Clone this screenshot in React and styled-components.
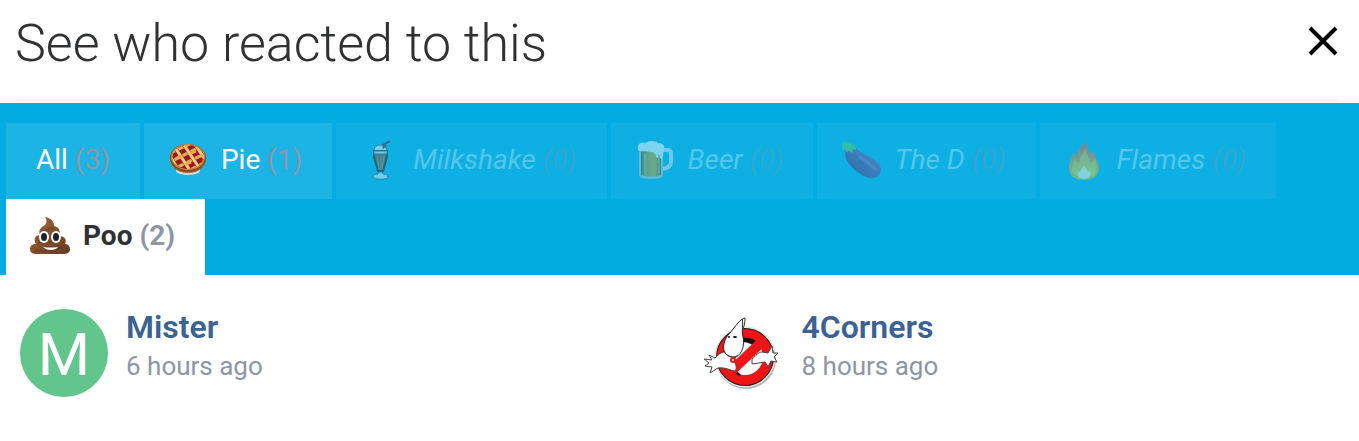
import React, { useState } from "react";
import styled, { createGlobalStyle } from "styled-components";

const GlobalStyle = createGlobalStyle`
  * {
    box-sizing: border-box;
  }
  body {
    margin: 0;
    background-color: #fff;
    color: #2f3132;
    font-family: Roboto, "Liberation Sans", sans-serif;
  }
`;

const Header = styled.header`
  display: flex;
  align-items: center;
  justify-content: space-between;
  margin: 0 21px 0 15px;
  padding: 8px 0 19px;
  border-bottom: 4px solid #f8f8f4;
`;

const Title = styled.h1`
  margin: 0;
  font-size: 52px;
  font-weight: 300;
  line-height: 72px;
`;

const CloseButton = styled.button`
  display: flex;
  padding: 0;
  margin-bottom: 6px;
  border: none;
  background: none;
  color: #000;
  cursor: pointer;
`;

const TabList = styled.div`
  display: flex;
  flex-wrap: wrap;
  column-gap: 4px;
  padding: 20px 6px 0;
  background-color: #02ace2;
`;

const Emoji = styled.svg`
  width: 40px;
  height: 40px;
  margin-right: 13px;
`;

const Count = styled.span`
  color: #8d96a5;
`;

const Tab = styled.button`
  display: flex;
  align-items: center;
  height: 76px;
  padding: 0 30px 2px;
  padding-left: ${({ $icon }) => ($icon ? "24px" : "30px")};
  border: none;
  background-color: rgba(255, 255, 255, 0.1);
  color: #fff;
  font-family: inherit;
  font-size: 28px;
  line-height: 36px;
  white-space: pre;
  cursor: pointer;

  &[aria-selected="true"] {
    background-color: #fff;
    color: #2f3132;
    font-weight: bold;
  }

  &:disabled {
    opacity: 0.5;
    color: rgba(255, 255, 255, 0.6);
    font-style: italic;
    cursor: default;
  }

  &:disabled ${Count} {
    opacity: 0.6;
  }
`;

const People = styled.ul`
  display: grid;
  grid-template-columns: 1fr 1fr;
  margin: 0;
  padding: 34px 4px;
  list-style: none;
`;

const Person = styled.li`
  display: flex;
  gap: 18px;
  padding-left: 16px;
`;

const Letter = styled.div`
  display: flex;
  align-items: center;
  justify-content: center;
  width: 88px;
  height: 88px;
  padding-top: 3px;
  border-radius: 50%;
  background-color: #62c58b;
  color: #fff;
  font-size: 60px;
`;

const Photo = styled.svg`
  width: 88px;
  height: 88px;
`;

const Name = styled.a`
  display: block;
  color: #3b6292;
  font-size: 32px;
  font-weight: 600;
  line-height: 36px;
  text-decoration: none;
`;

const Time = styled.div`
  margin-top: 3px;
  color: #8d96a5;
  font-size: 26px;
  line-height: 36px;
`;

const Pie = () => (
  <Emoji viewBox="0 0 40 40" aria-hidden="true">
    <ellipse cx="20" cy="31" rx="12" ry="4" fill="#cdd9df" />
    <path d="M2 18c0 9 8 15 18 15s18-6 18-15z" fill="#b5682a" />
    <ellipse cx="20" cy="18" rx="18" ry="14" fill="#8b4a1c" />
    <ellipse cx="20" cy="17" rx="17" ry="13" fill="#d18b3d" />
    <ellipse cx="20" cy="17" rx="15" ry="12" fill="#9c1420" />
    <clipPath id="pie">
      <ellipse cx="20" cy="17" rx="16" ry="12" />
    </clipPath>
    <g clipPath="url(#pie)" fill="none">
      <path d="M0 14 24 3M0 23 34 6M4 30 40 12M16 33 42 20" stroke="#8b3a16" strokeWidth="4" />
      <path d="M0 14 24 3M0 23 34 6M4 30 40 12M16 33 42 20" stroke="#eda957" strokeWidth="3" />
      <path d="M2 16 13 34M8 9 23 32M16 5 32 29M26 3 39 22" stroke="#8b3a16" strokeWidth="4" />
      <path d="M2 16 13 34M8 9 23 32M16 5 32 29M26 3 39 22" stroke="#f7c77e" strokeWidth="3" />
      <path d="m9 18 5-2M23 13l5-2M18 24l5-2M17 6l4-2M31 17l4-2" stroke="#eda957" strokeWidth="3" />
    </g>
  </Emoji>
);

const Milkshake = () => (
  <Emoji viewBox="0 0 40 40" aria-hidden="true">
    <path d="m21 6 9-5" stroke="#71232a" strokeWidth="2" />
    <path d="M14 12c0-5 3-7 6-7s7 2 7 7z" fill="#edf3f7" stroke="#53616d" />
    <path d="m22 7 3-3 2 2-4 3z" fill="#9b2334" />
    <path d="M14 11h13v6l-4 14h-5l-4-14z" fill="#80583a" stroke="#2d2926" strokeWidth="2" />
    <path d="M14 11h13v3H14z" fill="#d8dee3" stroke="#595d62" />
    <path d="m17 16 2 13M21 16v14M24 16l-2 13" stroke="#b58053" />
    <path d="m19 32-1 2c-3 0-5 1-5 3 0 3 15 3 15 0 0-2-2-3-5-3l-1-2z" fill="#e2edf5" stroke="#4d5c68" />
  </Emoji>
);

const Beer = () => (
  <Emoji viewBox="0 0 40 40" aria-hidden="true">
    <defs>
      <linearGradient id="beer">
        <stop stopColor="#6e6450" />
        <stop offset=".3" stopColor="#b99a3d" />
        <stop offset=".7" stopColor="#d5aa32" />
        <stop offset="1" stopColor="#71623c" />
      </linearGradient>
    </defs>
    <path d="M27 10h6q3 0 3 4v8q0 6-9 7" fill="none" stroke="#dce6eb" strokeWidth="4" />
    <path d="M4 9h24v26q0 4-12 4T4 35z" fill="#b8c5cc" />
    <path d="M6 10h20v25q-10 3-20 0z" fill="url(#beer)" />
    <path d="M10 13v22M24 13v21" stroke="#fff1a8" strokeWidth="2" opacity=".3" />
    <path d="M3 10C2 3 6 2 11 3c4-3 9-2 12 0 6 0 7 4 6 8-1 2-1 8-3 8-1 0-1-3-2-5-1 0 0 4-2 4-1 0-1-4-3-5-1-2-2 0-4-1-4-2-8 1-12-2z" fill="#fafafa" />
  </Emoji>
);

const Eggplant = () => (
  <Emoji viewBox="0 0 40 40" aria-hidden="true">
    <defs>
      <linearGradient id="eggplant" x1="1" y1="0" x2="0" y2="1">
        <stop stopColor="#9b72ad" />
        <stop offset=".5" stopColor="#734b91" />
        <stop offset="1" stopColor="#532b62" />
      </linearGradient>
    </defs>
    <path d="M4 9c-1 10 5 18 14 24 7 5 15 7 19 3 6-6 2-13-5-17-8-5-13-6-18-12z" fill="url(#eggplant)" />
    <path d="M18 16c7 7 13 8 17 14" fill="none" stroke="#b19ad0" strokeWidth="3" opacity=".35" />
    <path d="M1 5c1-4 5-5 7-2 4 0 7 3 7 7l-3-1-1 4-3-2-3 1-1-3-2 1z" fill="#67c96a" />
  </Emoji>
);

const Flames = () => (
  <Emoji viewBox="0 0 40 40" aria-hidden="true">
    <defs>
      <linearGradient id="flame" x1="0" y1="0" x2="0" y2="1">
        <stop stopColor="#e45b4b" />
        <stop offset=".6" stopColor="#e2a23c" />
        <stop offset="1" stopColor="#d9c52e" />
      </linearGradient>
      <linearGradient id="flame-inner" x1="0" y1="0" x2="0" y2="1">
        <stop stopColor="#e5a73c" />
        <stop offset="1" stopColor="#efe04c" />
      </linearGradient>
    </defs>
    <path d="M22 0c-1 5 3 8 4 14l4-3c0 6 5 10 5 17 0 8-6 12-15 12S5 36 5 28c0-6 3-9 4-15l4 3C12 8 20 7 22 0z" fill="url(#flame)" />
    <path d="M21 7c-1 7-6 9-6 17l-5-5c0 6-4 9-1 14 4 6 19 6 23 0 2-5 0-9-1-14l-5 5c0-8-5-9-5-17z" fill="url(#flame-inner)" />
    <path d="M20 25c-1 3-3 4-4 7l-2-1c-1 5 1 8 6 8s8-4 6-8l-2 1c-1-3-3-4-4-7z" fill="#fff8d8" />
  </Emoji>
);

const Poo = () => (
  <Emoji viewBox="0 0 40 40" aria-hidden="true">
    <defs>
      <linearGradient id="poo" x1="0" y1="0" x2="1" y2="1">
        <stop stopColor="#a06b45" />
        <stop offset=".5" stopColor="#83502e" />
        <stop offset="1" stopColor="#633a20" />
      </linearGradient>
    </defs>
    <path d="M15 1c6 1 9 4 9 9 5 1 7 5 5 10 6 0 8 4 6 8 4 0 5 3 5 6-1 4-5 4-8 4H7c-4 0-7-1-7-5 0-3 2-5 6-5-3-4-1-9 4-9-2-5 1-8 5-10 2-3 2-5 0-8z" fill="url(#poo)" />
    <path d="M12 14c4 1 8-1 11-3M8 26c7 2 17 0 23-5M5 34c10 2 23 1 30-5" fill="none" stroke="#5b3821" strokeWidth="2" opacity=".4" />
    <ellipse cx="14" cy="21" rx="5" ry="6" fill="#fff" />
    <ellipse cx="26" cy="21" rx="5" ry="6" fill="#fff" />
    <ellipse cx="14" cy="21" rx="3" ry="4" fill="#202326" />
    <ellipse cx="26" cy="21" rx="3" ry="4" fill="#202326" />
    <path d="M13 31q7 1 15 0-2 3-7 3t-8-3z" fill="#fff" />
  </Emoji>
);

const GhostAvatar = () => (
  <Photo viewBox="0 0 88 88" role="img" aria-label="4Corners">
    <circle cx="50" cy="50" r="30" fill="#b5b5b5" />
    <circle cx="49" cy="48" r="30" fill="#fff" stroke="#ddd" />
    <circle cx="49" cy="48" r="24" fill="#fff" stroke="#171717" strokeWidth="10" />
    <circle cx="49" cy="48" r="23" fill="#fff" stroke="#ed1515" strokeWidth="10" />
    <path d="M46 29c7-1 12 1 15 4l-4 3c-4-2-7-3-11-3z" fill="#111" />
    <path d="M35 61c3-4 5-2 5 1 2 1 4 2 5 5-4-1-8-3-10-6z" fill="#111" />
    <path d="M69 30 31 66" stroke="#ed1515" strokeWidth="10" />
    {/* arms */}
    <path d="M29 43c-4 0-7 3-10 6l-6-3 3 5-8-1 5 4-4 3 7 1-2 6 8-5c8-1 13 3 17 3 3-3 0-9-3-14z" fill="#fff" stroke="#444" />
    <path d="M56 50c4-3 6-7 10-7l6 1 4-7 1 7h5l-4 4 3 5-6-1-3 6-3-5-13 2z" fill="#fff" stroke="#444" />
    {/* head */}
    <path d="M42 18c2-5 4-9 7-9 0 5-1 10-3 13" fill="#fff" stroke="#333" />
    <path d="M29 44c-3-6-1-12 3-18 5-5 8-11 14-16 2 5-1 11 1 18 2 8-1 17-7 20-4 1-8-1-11-4z" fill="#fff" stroke="#222" />
    <ellipse cx="33" cy="28" rx="1" ry="1" fill="#111" />
    <ellipse cx="39" cy="28" rx="2" ry="1" fill="#111" />
    <path d="M29 44c3 4 8 5 12 3l-4 3" fill="none" stroke="#333" />
    <circle cx="37" cy="51" r="2" fill="#fff" stroke="#d91d21" strokeWidth="2" />
  </Photo>
);

const tabs = [
  { name: "All", count: 3 },
  { name: "Pie", count: 1, icon: Pie },
  { name: "Milkshake", count: 0, icon: Milkshake },
  { name: "Beer", count: 0, icon: Beer },
  { name: "The D", count: 0, icon: Eggplant },
  { name: "Flames", count: 0, icon: Flames },
  { name: "Poo", count: 2, icon: Poo },
];

const App = () => {
  const [active, setActive] = useState("Poo");

  return (
    <main>
      <GlobalStyle />
      <Header>
        <Title>See who reacted to this</Title>
        <CloseButton type="button" aria-label="Close">
          <svg width="30" height="30" viewBox="0 0 30 30">
            <path d="m2 2 26 26M28 2 2 28" stroke="currentColor" strokeWidth="4" />
          </svg>
        </CloseButton>
      </Header>
      <TabList role="tablist">
        {tabs.map(({ name, count, icon: Icon }) => (
          <Tab
            key={name}
            type="button"
            role="tab"
            $icon={!!Icon}
            aria-selected={active === name}
            disabled={count === 0}
            onClick={() => setActive(name)}
          >
            {Icon && <Icon />}
            {name} <Count>({count})</Count>
          </Tab>
        ))}
      </TabList>
      <People>
        <Person>
          <Letter aria-hidden="true">M</Letter>
          <div>
            <Name href="#mister">Mister</Name>
            <Time>6 hours ago</Time>
          </div>
        </Person>
        <Person>
          <GhostAvatar />
          <div>
            <Name href="#4corners">4Corners</Name>
            <Time>8 hours ago</Time>
          </div>
        </Person>
      </People>
    </main>
  );
};

export default App;
